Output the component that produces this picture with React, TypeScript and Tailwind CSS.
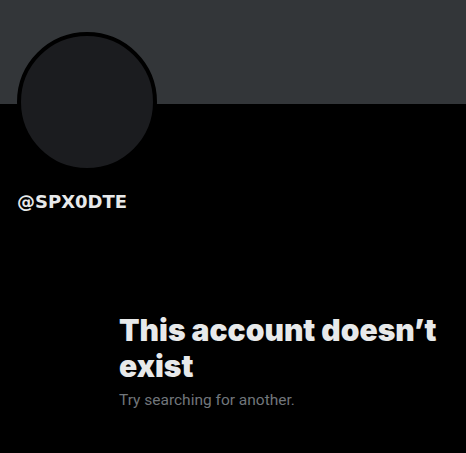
import * as React from 'react';

export default function App() {
  return (
    <div className="w-[466px] h-[453px] bg-black overflow-hidden">
      <div className="h-[104px] bg-[#333639]" />
      <div className="px-[17px]">
        <div className="-mt-[72px] w-[140px] h-[140px] rounded-full border-4 border-black bg-[#1b1c1f]" />
        <div className="mt-[20px] text-[18px] leading-[20px] font-bold text-[#e7e9ea] font-['DejaVu_Sans',sans-serif]">
          @SPX0DTE
        </div>
      </div>
      <div className="ml-[119px] mt-[100px] w-[335px] font-['Inter',sans-serif]">
        <h1 className="text-[30px] leading-[36px] font-black text-[#e7e9ea]">
          This account doesn’t exist
        </h1>
        <p className="mt-[6px] text-[15.5px] leading-[20px] text-[#71767b] font-['Roboto',sans-serif]">
          Try searching for another.
        </p>
      </div>
    </div>
  );
}
